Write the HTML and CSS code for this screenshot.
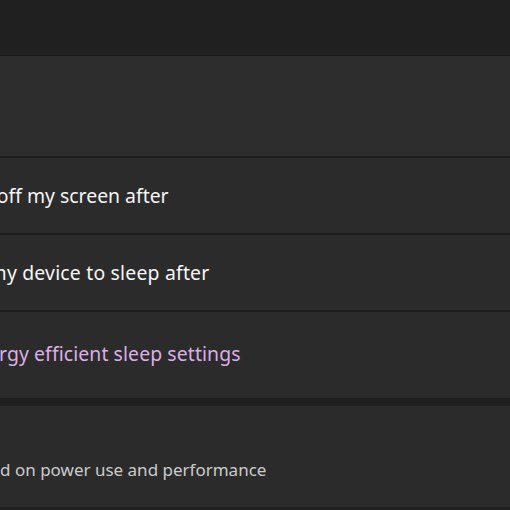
FILE: index.html
```html
<!DOCTYPE html>
<html lang="en">
<head>
<meta charset="utf-8">
<title>Power &amp; battery</title>
<link rel="stylesheet" href="styles.css">
</head>
<body>
<main class="page">
  <header class="top"></header>
  <section class="group">
    <div class="expander">
      <span class="title title-screen">Screen and sleep</span>
    </div>
    <div class="row">
      <span class="label label-screen">Turn off my screen after</span>
    </div>
    <div class="row">
      <span class="label label-sleep">Put my device to sleep after</span>
    </div>
    <div class="row row-link">
      <a class="link label-link" href="#">Energy efficient sleep settings</a>
    </div>
  </section>
  <section class="card">
    <div class="card-text">
      <span class="title">Power mode</span>
      <span class="desc">Optimize your device based on power use and performance</span>
    </div>
  </section>
</main>
</body>
</html>
```
FILE: styles.css
```css
html, body {
  margin: 0;
  padding: 0;
  background: #202020;
  overflow: hidden;
}
body {
  font-family: "Noto Sans", "Open Sans", sans-serif;
  color: #f5f5f5;
}
.page {
  display: flex;
  flex-direction: column;
  width: 510px;
  height: 510px;
}
.top {
  height: 55px;
  background: #202020;
  border-bottom: 1px solid #1b1b1b;
}
.group {
  display: flex;
  flex-direction: column;
  gap: 2px;
  background: #1d1d1d;
}
.expander {
  height: 100px;
  background: #2d2d2d;
  display: flex;
  align-items: center;
}
.row {
  height: 75px;
  background: #2b2b2b;
  display: flex;
  align-items: center;
  white-space: nowrap;
}
.row-link {
  height: 86px;
  padding-bottom: 4px;
  box-sizing: border-box;
}
.title {
  font-size: 19.4px;
  white-space: nowrap;
}
.title-screen {
  margin-left: -200px;
}
.label {
  font-size: 19.4px;
  color: #f5f5f5;
}
.label-screen {
  margin-left: -50px;
}
.label-sleep {
  margin-left: -48px;
  letter-spacing: 0.2px;
}
.link {
  font-size: 19.4px;
  color: #dcafe6;
  text-decoration: none;
  letter-spacing: 0.1px;
}
.label-link {
  margin-left: -35px;
}
.card {
  margin-top: 8px;
  height: 101px;
  background: #2b2b2b;
  display: flex;
  align-items: center;
}
.card-text {
  display: flex;
  flex-direction: column;
  gap: 2px;
  padding-bottom: 4px;
  margin-left: -210px;
  white-space: nowrap;
}
.desc {
  font-size: 17px;
  color: #cbcbcb;
}
```
